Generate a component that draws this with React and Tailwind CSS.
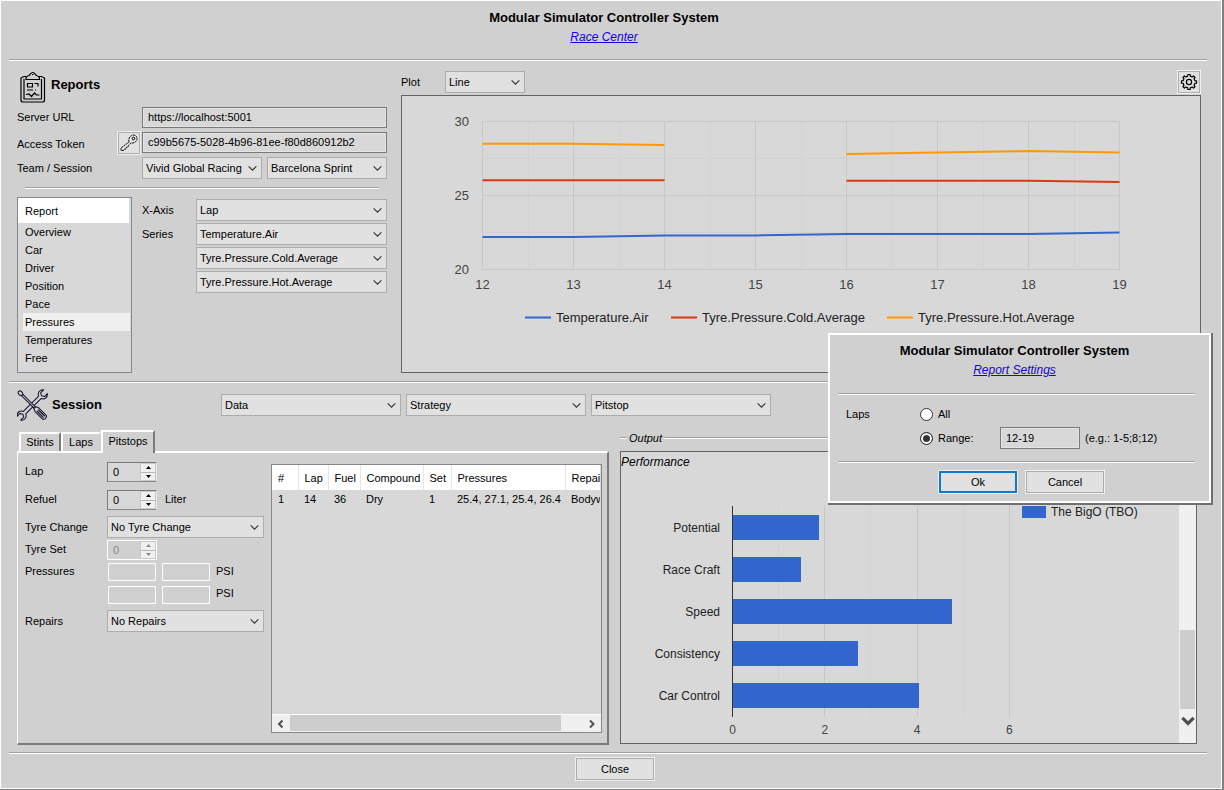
import React from "react";

const focusless = "outline-none rounded-none m-0";

function Rule({ className = "" }) {
  return <hr className={`h-0.5 shrink-0 border-0 border-t border-b border-t-[#a0a0a0] border-b-white ${className}`} />;
}

function Chevron({ className = "", dir = "down" }) {
  const d = { down: "M1.500 3 5 6.500 8.500 3", up: "M1.500 6.500 5 3 8.500 6.500", left: "M6.500 1.500 3 5 6.500 8.500", right: "M3 1.500 6.500 5 3 8.500" }[dir];
  return (
    <svg viewBox="0 0 10 10" className={className} fill="none" stroke="currentColor" aria-hidden="true">
      <path d={d} />
    </svg>
  );
}

function Select({ value, label, className = "" }) {
  return (
    <span className={`grid h-[22px] items-center ${className}`}>
      <select
        aria-label={label}
        defaultValue={value}
        className={`col-start-1 row-start-1 h-full w-full appearance-none border border-[#adadad] bg-[#e1e1e1] pr-4 pl-[3px] text-[11px] text-black ${focusless}`}
      >
        <option>{value}</option>
      </select>
      <Chevron className="pointer-events-none col-start-1 row-start-1 mr-1 h-[11px] w-[11px] justify-self-end text-[#333]" />
    </span>
  );
}

function TextBox({ id, value, className = "" }) {
  return (
    <input
      id={id}
      type="text"
      defaultValue={value}
      className={`border border-[#7a7a7a] bg-[#d8d8d8] px-[5px] pb-0.5 text-[11px] shadow-[inset_0_0_0_1px_#e4e4e4] ${focusless} ${className}`}
    />
  );
}

function Spinner({ id, value, disabled = false }) {
  return (
    <div
      className={
        disabled
          ? "flex h-5 w-[50px] border border-white text-[#8a8a8a]"
          : "flex h-5 w-[50px] border border-r-[#e8e8e8] border-b-[#8a8a8a] border-t-[#7a7a7a] border-l-[#7a7a7a] bg-[#d8d8d8]"
      }
    >
      <input
        id={id}
        type="text"
        inputMode="numeric"
        defaultValue={value}
        disabled={disabled}
        className={`w-8 min-w-0 flex-1 bg-transparent pl-[5px] text-[11px] ${focusless}`}
      />
      <div className="flex w-4 flex-col border border-[#c8c8c8] bg-[#f0f0f0]">
        <button type="button" aria-label="Increase" disabled={disabled} className="flex flex-1 items-center justify-center border-b border-[#b8b8b8]">
          <svg viewBox="0 0 5 3" className="h-[3px] w-[5px]" fill="currentColor"><path d="M0 3 2.5 0 5 3z" /></svg>
        </button>
        <button type="button" aria-label="Decrease" disabled={disabled} className="flex flex-1 items-center justify-center">
          <svg viewBox="0 0 5 3" className="h-[3px] w-[5px]" fill="currentColor"><path d="M0 0 2.5 3 5 0z" /></svg>
        </button>
      </div>
    </div>
  );
}

function PushButton({ children, primary = false }) {
  return (
    <button
      type="button"
      className={`h-[22px] w-[78px] bg-[#e1e1e1] text-[11px] outline outline-1 outline-[#f0f0f0] ${
        primary ? "border-2 border-[#0f78d0]" : "border border-[#adadad]"
      }`}
    >
      {children}
    </button>
  );
}

function ClipboardIcon() {
  return (
    <svg viewBox="0 0 32 32" className="h-8 w-8" fill="none" stroke="#000" strokeWidth="1.200" aria-hidden="true">
      <path d="M9 5.500H7M7 5.500L4 7V29Q4 31 6 31H25.500Q27.500 31 27.500 29V7L24.500 5.500H22" />
      <path d="M7.500 8.500H7V28H24.500V8.500H24" />
      <path d="M9 8.500V7Q9.500 5 12 4.500 13 4 13.500 2.800 15.500.2 18 2.800 18.500 4 19.500 4.500 22 5 22.500 7V8.500z" />
      <path d="M15 3.500h1.500" />
      <path d="M10.500 12.500h5v3.500h-5zM17.500 12.500h3.500v3M10 19h6M18 19h1" />
      <path d="M9 23.500l3-.5 2.500 2.500 3-3.500 2 2h3" />
    </svg>
  );
}

function ToolsIcon() {
  return (
    <svg viewBox="0 0 32 32" className="h-8 w-8" fill="#d0d0d0" stroke="#15122e" strokeWidth="1.100" strokeLinejoin="round" aria-hidden="true">
      <g transform="translate(15.200 16) rotate(45) scale(.94)">
        <path d="M-1.800-11.500C-5.500-13-6-17.500-2.800-20V-15.500L0-14 2.800-15.500V-20C6-17.500 5.500-13 1.800-11.500V11.500C5.500 13 6 17.500 2.800 20V15.500L0 14-2.800 15.500V20C-6 17.500-5.500 13-1.800 11.500z" />
      </g>
      <g transform="translate(15.200 16) rotate(-45) scale(.94)">
        <path d="M-1-15H1V4H-1z" />
        <path d="M0-20.500Q2.500-20 2-17L1-15H-1L-2-17Q-2.500-20 0-20.500z" />
        <path d="M-1.500 4H1.500L2.800 7V18Q2.800 20 0 20T-2.800 18V7z" />
        <path d="M-1 8V18M1 8V18" strokeWidth="1.300" />
      </g>
    </svg>
  );
}

function KeyIcon() {
  return (
    <svg viewBox="0 0 18 18" className="h-[18px] w-[18px]" fill="none" stroke="#000" strokeLinejoin="round" aria-hidden="true">
      <path d="M9 8Q8 4 11 2 14-.2 16.500 2.500 18 5.500 15.500 7.800 13.500 9.500 11 8.800L8.500 11.500 8 13 6.500 13.200 6 15 4.500 15 3.500 16.500H1V14z" strokeDasharray="2.200 .7" />
      <circle cx="13.500" cy="4.500" r="1.300" />
    </svg>
  );
}

function gearPath(cx, cy, outer, inner, teeth) {
  const step = (Math.PI * 2) / teeth;
  const points = [];
  for (let i = 0; i < teeth; i++) {
    const a = i * step - Math.PI / 2;
    [[-0.27, inner], [-0.19, outer], [0.19, outer], [0.27, inner]].forEach(([k, r]) => {
      points.push(`${(cx + Math.cos(a + k * step) * r).toFixed(2)} ${(cy + Math.sin(a + k * step) * r).toFixed(2)}`);
    });
  }
  return `M${points.join("L")}Z`;
}

function GearIcon() {
  return (
    <svg viewBox="0 0 18 18" className="h-[18px] w-[18px]" fill="none" stroke="#000" strokeWidth="1.200" strokeLinejoin="round" aria-hidden="true">
      <path d={gearPath(9, 9, 7.6, 6, 8)} />
      <circle cx="9" cy="9" r="2.600" />
    </svg>
  );
}

const LAPS = [12, 13, 14, 15, 16, 17, 18, 19];
const SERIES = [
  { name: "Temperature.Air", color: "#3366cc", x: 123, runs: [[[12, 22.2], [13, 22.2], [14, 22.3], [15, 22.3], [16, 22.4], [17, 22.4], [18, 22.4], [19, 22.5]]] },
  { name: "Tyre.Pressure.Cold.Average", color: "#dc3912", x: 269, runs: [[[12, 26.03], [13, 26.03], [14, 26.03]], [[16, 26], [17, 26], [18, 26], [19, 25.92]]] },
  { name: "Tyre.Pressure.Hot.Average", color: "#ff9900", x: 485, runs: [[[12, 28.5], [13, 28.5], [14, 28.42]], [[16, 27.8], [17, 27.9], [18, 28], [19, 27.9]]] },
];

function LineChart() {
  const px = (lap) => 80.5 + (lap - 12) * 91;
  const py = (v) => 25.5 + (30 - v) * 14.8;
  return (
    <svg viewBox="0 0 798 276" className="h-[276px] w-full font-['Liberation_Sans',sans-serif] text-[13px]" role="img" aria-label="Pressures and temperatures by lap">
      <g stroke="#d2d2d2">
        {LAPS.slice(0, -1).map((l) => <line key={l} x1={px(l) + 46} x2={px(l) + 46} y1="25" y2="174" />)}
        <line x1="80" x2="718" y1="62.500" y2="62.500" />
        <line x1="80" x2="718" y1="136.500" y2="136.500" />
      </g>
      <g stroke="#c8c8c8">
        {LAPS.map((l) => <line key={l} x1={px(l)} x2={px(l)} y1="25" y2="174" />)}
        {[30, 25, 20].map((v) => <line key={v} x1="80" x2="718" y1={Math.floor(py(v)) + 0.5} y2={Math.floor(py(v)) + 0.5} />)}
      </g>
      {SERIES.map((s) => s.runs.map((run, i) => (
        <polyline key={s.name + i} fill="none" stroke={s.color} strokeWidth="2" points={run.map(([l, v]) => `${px(l)},${py(v)}`).join(" ")} />
      )))}
      <g fill="#444">
        {[30, 25, 20].map((v) => <text key={v} x="67" y={py(v) + 4.5} textAnchor="end">{v}</text>)}
        {LAPS.map((l) => <text key={l} x={px(l)} y="193" textAnchor="middle">{l}</text>)}
      </g>
      {SERIES.map((s) => (
        <g key={s.name}>
          <line x1={s.x} x2={s.x + 26} y1="221.500" y2="221.500" stroke={s.color} strokeWidth="2" />
          <text x={s.x + 31} y="226" fill="#222">{s.name}</text>
        </g>
      ))}
    </svg>
  );
}

const SKILLS = [["Potential", 1.87], ["Race Craft", 1.48], ["Speed", 4.75], ["Consistency", 2.71], ["Car Control", 4.04]];

function BarChart() {
  const unit = 46.15;
  return (
    <svg viewBox="0 0 558 271" className="h-[271px] w-full font-['Liberation_Sans',sans-serif] text-[12px]" role="img" aria-label="Driver performance">
      <g strokeWidth="1">
        {[1, 3, 5].map((v) => <line key={v} x1={Math.floor(111.5 + v * unit) + 0.5} x2={Math.floor(111.5 + v * unit) + 0.5} y1="34" y2="245" stroke="#d2d2d2" />)}
        {[2, 4, 6].map((v) => <line key={v} x1={Math.floor(111.5 + v * unit) + 0.5} x2={Math.floor(111.5 + v * unit) + 0.5} y1="34" y2="245" stroke="#c6c6c6" />)}
      </g>
      {SKILLS.map(([name, v], i) => (
        <g key={name}>
          <rect x="112" y={43 + i * 42} width={Math.round(v * unit)} height="25" fill="#3366cc" />
          <text x="99" y={60 + i * 42} textAnchor="end" fill="#222">{name}</text>
        </g>
      ))}
      <line x1="111.500" x2="111.500" y1="34" y2="245" stroke="#333" />
      {[0, 2, 4, 6].map((v) => <text key={v} x={111.5 + v * unit} y="262" textAnchor="middle" fill="#444">{v}</text>)}
      <rect x="401" y="34" width="24" height="12" fill="#3366cc" />
      <text x="430" y="44" fill="#222">The BigO (TBO)</text>
    </svg>
  );
}

const REPORTS = ["Overview", "Car", "Driver", "Position", "Pace", "Pressures", "Temperatures", "Free"];

function ReportsPanel() {
  return (
    <section className="flex gap-3.5 pt-2.5 pr-1.5 pb-2 pl-2">
      <div className="w-[370px] shrink-0">
        <div className="flex h-8 items-center gap-0.5">
          <ClipboardIcon />
          <h2 className="pb-1 text-[13px] font-bold">Reports</h2>
        </div>
        <div className="mt-1 grid grid-cols-[101px_24px_1fr] items-center gap-y-1">
          <label htmlFor="url" className="col-span-2 pb-0.5">Server URL</label>
          <TextBox id="url" value="https://localhost:5001" className="h-[21px]" />
          <label htmlFor="token" className="mt-0.5">Access Token</label>
          <button type="button" aria-label="Renew token" className="-my-1 flex h-[22px] w-[22px] items-center justify-center border border-[#adadad] bg-[#e1e1e1] outline outline-1 outline-[#f0f0f0]">
            <KeyIcon />
          </button>
          <TextBox id="token" value="c99b5675-5028-4b96-81ee-f80d860912b2" className="h-[21px]" />
          <span className="col-span-2">Team / Session</span>
          <div className="grid grid-cols-2 gap-[5px]">
            <Select label="Team" value="Vivid Global Racing" />
            <Select label="Session" value="Barcelona Sprint" />
          </div>
        </div>
        <Rule className="my-2 mr-2 ml-2" />
        <div className="flex gap-2.5">
          <ul role="listbox" aria-label="Report" className="w-[115px] border border-[#828790] bg-[#d8d8d8] pb-[5px]">
            <li role="presentation" className="mr-0.5 flex h-[25px] items-center bg-white pl-[7px]">Report</li>
            {REPORTS.map((r) => (
              <li key={r} role="option" aria-selected={r === "Pressures"} className={`mr-px ml-[5px] flex h-[18px] items-center pl-0.5 ${r === "Pressures" ? "bg-[#f0f0f0]" : ""}`}>{r}</li>
            ))}
          </ul>
          <div className="mt-0.5 grid flex-1 grid-cols-[54px_1fr] content-start items-center gap-y-0.5">
            <span>X-Axis</span>
            <Select label="X-Axis" value="Lap" />
            <span>Series</span>
            <Select label="Series 1" value="Temperature.Air" />
            <Select label="Series 2" value="Tyre.Pressure.Cold.Average" className="col-start-2" />
            <Select label="Series 3" value="Tyre.Pressure.Hot.Average" className="col-start-2" />
          </div>
        </div>
      </div>
      <div className="flex min-w-0 flex-1 flex-col">
        <div className="flex h-6 items-start">
          <span className="w-11 leading-[22px]">Plot</span>
          <Select label="Plot" value="Line" className="w-20" />
          <button type="button" aria-label="Report settings" className="mr-px ml-auto flex h-[22px] w-[22px] items-center justify-center border border-[#adadad] bg-[#e1e1e1] outline outline-1 outline-[#f0f0f0]">
            <GearIcon />
          </button>
        </div>
        <div className="flex-1 border border-[#646464] bg-[#d8d8d8]">
          <LineChart />
        </div>
      </div>
    </section>
  );
}

function PitstopForm() {
  const pressure = "h-[18px] w-12 border border-white bg-transparent px-1 text-[11px]";
  const caption = "pb-[3px]";
  return (
    <form className="grid w-[246px] grid-cols-[82px_1fr] grid-rows-[28px_28px_26px_20px_24px_21px_32px] content-start items-center pt-[5px]">
      <label htmlFor="lap" className={caption}>Lap</label>
      <Spinner id="lap" value="0" />
      <label htmlFor="refuel" className={caption}>Refuel</label>
      <div className="flex items-center gap-2"><Spinner id="refuel" value="0" /><span className={caption}>Liter</span></div>
      <span>Tyre Change</span>
      <Select label="Tyre Change" value="No Tyre Change" className="w-[157px]" />
      <label htmlFor="set" className={caption}>Tyre Set</label>
      <Spinner id="set" value="0" disabled />
      <span className={caption}>Pressures</span>
      <div className="flex items-center gap-1.5 pl-px">
        <input aria-label="Pressure front left" disabled className={pressure} />
        <input aria-label="Pressure front right" disabled className={pressure} />
        <span className={caption}>PSI</span>
      </div>
      <div className="col-start-2 flex items-center gap-1.5 pl-px">
        <input aria-label="Pressure rear left" disabled className={pressure} />
        <input aria-label="Pressure rear right" disabled className={pressure} />
        <span className={caption}>PSI</span>
      </div>
      <span>Repairs</span>
      <Select label="Repairs" value="No Repairs" className="w-[157px]" />
    </form>
  );
}

const COLUMNS = ["#", "Lap", "Fuel", "Compound", "Set", "Pressures", "Repairs"];
const WIDTHS = ["w-[26px]", "w-[30px]", "w-8", "w-[63px]", "w-7", "w-[114px]", "w-20"];
const ROWS = [["1", "14", "36", "Dry", "1", "25.4, 27.1, 25.4, 26.4", "Bodywork"]];

function PitstopTable() {
  return (
    <div className="flex min-w-0 flex-1 flex-col border border-[#828790] bg-[#d8d8d8]">
      <div className="mr-px flex-1 overflow-hidden">
        <table className="w-[373px] table-fixed border-collapse text-left whitespace-nowrap">
          <thead>
            <tr className="h-[25px] bg-white">
              {COLUMNS.map((c, i) => <th key={c} className={`border-r border-[#e5e5e5] p-0 pl-1.5 font-normal ${WIDTHS[i]}`}>{c}</th>)}
            </tr>
          </thead>
          <tbody>
            {ROWS.map((row) => (
              <tr key={row[0]} className="h-[18px]">
                {row.map((cell, i) => <td key={COLUMNS[i]} className="p-0 pl-1.5">{cell}</td>)}
              </tr>
            ))}
          </tbody>
        </table>
      </div>
      <div className="flex h-[18px] border-t border-white bg-[#f0f0f0]">
        <button type="button" aria-label="Scroll left" className="flex w-[18px] items-center justify-center text-[#505050]"><Chevron dir="left" className="h-2.5 w-2.5 stroke-2" /></button>
        <div className="mb-px w-[271px] bg-[#cdcdcd]" />
        <button type="button" aria-label="Scroll right" className="ml-auto flex w-[18px] items-center justify-center text-[#505050]"><Chevron dir="right" className="h-2.5 w-2.5 stroke-2" /></button>
      </div>
    </div>
  );
}

function SessionPanel() {
  const tab = "border-t-2 border-l-2 border-r-2 border-t-white border-l-white bg-[#d0d0d0]";
  return (
    <section className="flex flex-1 flex-col pt-1.5 pr-2.5 pb-[7px] pl-2">
      <div className="flex h-8 items-center">
        <div className="flex w-[204px] items-center gap-[3px]">
          <ToolsIcon />
          <h2 className="text-[13px] font-bold">Session</h2>
        </div>
        <div className="flex gap-[5px]">
          <Select label="Data" value="Data" className="w-[180px]" />
          <Select label="Strategy" value="Strategy" className="w-[180px]" />
          <Select label="Pitstop" value="Pitstop" className="w-[180px]" />
        </div>
      </div>
      <div className="flex flex-1 gap-[11px]">
        <div className="flex w-[592px] shrink-0 flex-col pt-[9px]">
          <div role="tablist" className="z-10 -mb-0.5 flex items-end pl-0.5">
            <button type="button" role="tab" aria-selected="false" className={`mb-0.5 h-[19px] w-[42px] border-r-[#7a7a7a] pb-0.5 ${tab}`}>Stints</button>
            <button type="button" role="tab" aria-selected="false" className={`mb-0.5 h-[19px] w-10 border-r-[#d0d0d0] pb-0.5 ${tab}`}>Laps</button>
            <button type="button" role="tab" aria-selected="true" className={`h-[23px] w-[54px] border-r-[#7a7a7a] pb-1 ${tab}`}>Pitstops</button>
          </div>
          <div role="tabpanel" className="flex flex-1 border-t-2 border-r-2 border-b-2 border-l border-t-white border-l-white border-r-[#7a7a7a] border-b-[#7a7a7a] pl-[7px]">
            <PitstopForm />
            <div className="flex min-w-0 flex-1 pt-[11px] pr-[5px] pb-2.5">
              <PitstopTable />
            </div>
          </div>
        </div>
        <div className="flex min-w-0 flex-1 flex-col pb-px">
          <div className="flex h-[30px] items-center gap-0.5 pt-1">
            <Rule className="w-[7px]" />
            <h3 className="italic">Output</h3>
            <Rule className="flex-1" />
          </div>
          <div className="flex flex-1 border border-[#646464] bg-[#d8d8d8]">
            <div className="min-w-0 flex-1">
              <h4 className="h-5 text-[12px] leading-5 italic">Performance</h4>
              <BarChart />
            </div>
            <div className="flex w-[17px] shrink-0 flex-col bg-[#f0f0f0] pb-2.5">
              <button type="button" aria-label="Scroll up" className="flex h-6 items-center justify-center text-[#505050]"><Chevron dir="up" className="h-3 w-3 stroke-2" /></button>
              <div className="flex-1" />
              <div className="mx-px h-[79px] bg-[#cdcdcd]" />
              <button type="button" aria-label="Scroll down" className="flex h-6 items-center justify-center text-[#505050]"><Chevron className="h-4 w-4 stroke-2" /></button>
            </div>
          </div>
        </div>
      </div>
    </section>
  );
}

function Radio({ id, label, checked = false }) {
  return (
    <label htmlFor={id} className="flex items-center gap-[5px]">
      <input
        id={id}
        type="radio"
        name="laps"
        defaultChecked={checked}
        className="m-0 h-[13px] w-[13px] appearance-none rounded-full border border-[#333] bg-white checked:bg-[#333] checked:shadow-[inset_0_0_0_2px_#fff]"
      />
      {label}
    </label>
  );
}

function SettingsDialog() {
  return (
    <div role="dialog" aria-label="Report Settings" className="absolute top-[333px] right-[9px] z-20 w-[385px] border-r-2 border-b-2 border-[#707070]">
      <div className="flex flex-col border-2 border-white bg-[#d0d0d0] pr-3.5 pl-2">
        <div className="flex h-[58px] flex-col items-center pt-1.5 pr-1">
          <h2 className="text-[13px] leading-5 font-bold">Modular Simulator Controller System</h2>
          <a href="#settings" className="text-[12px] leading-[18px] text-[#1400e0] italic underline">Report Settings</a>
        </div>
        <Rule />
        <div className="grid grid-cols-[74px_80px_80px_1fr] grid-rows-[24px_24px] items-center pt-[7px] pb-[11px] pl-2">
          <span>Laps</span>
          <Radio id="all" label="All" />
          <div className="col-start-2"><Radio id="range" label="Range:" checked /></div>
          <input aria-label="Lap range" type="text" defaultValue="12-19" className={`h-[22px] border border-[#7a7a7a] bg-[#d8d8d8] px-[5px] text-[11px] shadow-[inset_0_0_0_1px_#e4e4e4] ${focusless}`} />
          <span className="pl-[5px]">(e.g.: 1-5;8;12)</span>
        </div>
        <Rule />
        <div className="flex justify-center gap-[9px] pt-2 pb-2 pl-2.5">
          <PushButton primary>Ok</PushButton>
          <PushButton>Cancel</PushButton>
        </div>
      </div>
    </div>
  );
}

export default function App() {
  return (
    <div className="relative flex min-h-screen flex-col border-r-2 border-b border-[#808080] bg-[#d0d0d0] font-['Liberation_Sans',Arial,sans-serif] text-[11px] leading-4 text-black">
      <main className="flex flex-1 flex-col border border-white pr-3.5 pl-2">
        <header className="flex h-[58px] flex-col items-center pt-[7px] pr-2">
          <h1 className="text-[13px] leading-5 font-bold">Modular Simulator Controller System</h1>
          <a href="#race-center" className="text-[12px] leading-[18px] text-[#1400e0] italic underline">Race Center</a>
        </header>
        <Rule />
        <ReportsPanel />
        <Rule />
        <SessionPanel />
        <Rule />
        <footer className="flex h-[34px] justify-center pt-1 pl-3.5">
          <PushButton>Close</PushButton>
        </footer>
      </main>
      <SettingsDialog />
    </div>
  );
}
